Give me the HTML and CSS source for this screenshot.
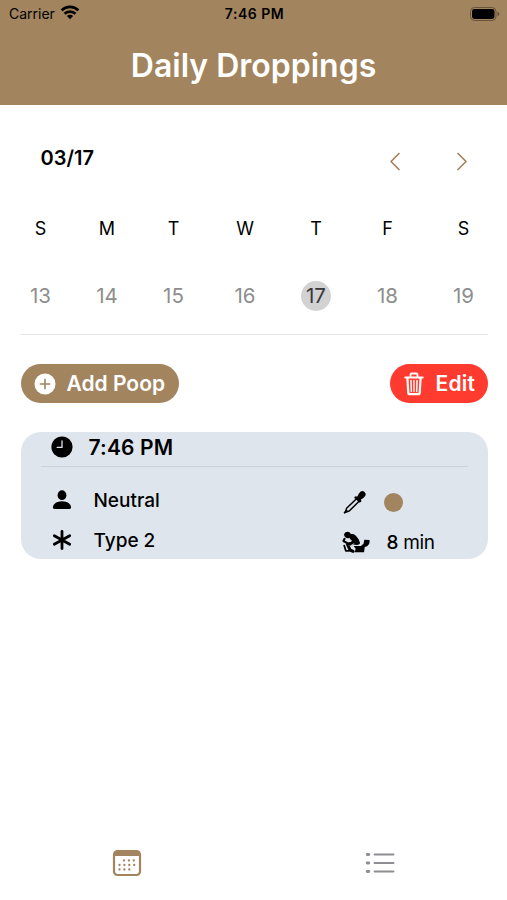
FILE: index.html
```
<!DOCTYPE html>
<html lang="en">
<head>
  <meta charset="UTF-8">
  <meta name="viewport" content="width=device-width, initial-scale=1.0">
  <title>Daily Droppings</title>
  <link rel="stylesheet" href="styles.css">
</head>
<body>
  <div class="app">
    <!-- Header with status bar -->
    <header class="header">
      <div class="status-bar">
        <div class="carrier">
          <span>Carrier</span>
          <svg width="20" height="15" viewBox="0 0 20 15">
            <g fill="none" stroke="#000" stroke-width="2.7">
              <path d="M1.6 5.4a12 12 0 0 1 16.8 0"/>
              <path d="M4.5 8.8a7.8 7.8 0 0 1 11 0"/>
            </g>
            <path d="M10 14.2l-3.1-3.1a4.4 4.4 0 0 1 6.2 0z"/>
          </svg>
        </div>
        <span class="status-time">7:46 PM</span>
        <svg class="battery" width="30" height="14" viewBox="0 0 30 14">
          <rect x=".5" y=".5" width="25.5" height="13" rx="4" fill="none" stroke="#69543a"/>
          <rect x="2" y="2" width="22.5" height="10" rx="2.4"/>
          <path d="M27.5 4.8v4.4q2-.8 2-2.2t-2-2.2z" fill="#69543a"/>
        </svg>
      </div>
      <h1>Daily Droppings</h1>
    </header>

    <main class="content">
      <!-- Week picker -->
      <div class="week-header">
        <h2>03/17</h2>
        <div class="week-nav">
          <button class="nav-btn" aria-label="Previous week">
            <svg width="12" height="19" viewBox="0 0 12 19"><path d="M10 1.5l-8 8 8 8"/></svg>
          </button>
          <button class="nav-btn" aria-label="Next week">
            <svg width="12" height="19" viewBox="0 0 12 19"><path d="M2 1.5l8 8-8 8"/></svg>
          </button>
        </div>
      </div>

      <div class="week days">
        <span>S</span><span>M</span><span>T</span><span>W</span><span>T</span><span>F</span><span>S</span>
      </div>
      <div class="week dates">
        <span>13</span><span>14</span><span>15</span><span>16</span><span class="selected">17</span><span>18</span><span>19</span>
      </div>

      <div class="actions">
        <button class="btn add-btn">
          <svg width="22" height="22" viewBox="0 0 22 22">
            <circle cx="11" cy="11" r="10.5" fill="#fff"/>
            <path d="M11 6.3v9.4M6.3 11h9.4" stroke="#a2845e" stroke-width="1.6" stroke-linecap="round"/>
          </svg>
          <span>Add Poop</span>
        </button>
        <button class="btn edit-btn">
          <svg width="20" height="24" viewBox="0 0 20 24" fill="none" stroke="#fff" stroke-linecap="round" stroke-linejoin="round">
            <path d="M6.5 4.5V2.7q0-1.2 1.2-1.2h4.6q1.2 0 1.2 1.2v1.8" stroke-width="1.8"/>
            <path d="M1.3 5.4h17.4" stroke-width="2"/>
            <path d="M3.4 6l.9 14.6q.1 1.6 1.6 1.6h8.2q1.5 0 1.6-1.6l.9-14.6" stroke-width="2.2"/>
            <path d="M7 8.5l.3 11M10 8.5v11M13 8.5l-.3 11" stroke-width="1.4"/>
          </svg>
          <span>Edit</span>
        </button>
      </div>

      <!-- Log entry -->
      <section class="entry">
        <div class="entry-time">
          <svg width="22" height="22" viewBox="0 0 22 22">
            <circle cx="11" cy="11" r="10.6"/>
            <path d="M11 4.8v6.6H6.2" fill="none" stroke="#dfe5ec" stroke-width="1.3" stroke-linecap="round"/>
          </svg>
          <span>7:46 PM</span>
        </div>
        <div class="entry-grid">
          <div class="detail">
            <svg width="20" height="20" viewBox="0 0 20 20">
              <ellipse cx="10" cy="5.2" rx="4.4" ry="4.9"/>
              <path d="M1 17.2c0-3.1 3.6-6 9-6s9 2.9 9 6q0 1.9-1.8 1.9H2.8Q1 19.1 1 17.2z"/>
            </svg>
            <span>Neutral</span>
          </div>
          <div class="detail detail-right">
            <svg width="28" height="24" viewBox="0 0 28 24">
              <path d="M3.6 21.8l1-3.5L15 8.2l2.6 2.6L7.2 21l-2.9 1z" fill="none" stroke="#000" stroke-width="1.5" stroke-linejoin="round"/>
              <path d="M2.7 22.6l1.8-1.8" stroke="#000" stroke-width="2" stroke-linecap="round"/>
              <path d="M12.6 6.9q1.1-1.3 2.5-.2l1.8-3.3q3-3.7 5.6-1.5 2.9 2.7-.9 5.8l-2.9 2q1.3 1.2.1 2.4-1.1.9-2.1-.1l-4-3.8q-.8-.6-.1-1.3z"/>
            </svg>
            <span class="color-dot"></span>
          </div>
          <div class="detail">
            <svg width="20" height="20" viewBox="0 0 20 20">
              <path d="M10 1.5v17M2.3 5.7l15.4 8.6M2.3 14.3l15.4-8.6" stroke="#000" stroke-width="2.8" stroke-linecap="round"/>
            </svg>
            <span>Type 2</span>
          </div>
          <div class="detail detail-right">
            <!-- person bent over on the toilet -->
            <svg width="28" height="22" viewBox="0 0 28 22">
              <path d="M2 3.6Q2.6.7 5.8.7q2.6 0 3.2 2.6.4 2.4-1.6 3.6-2.2 1.1-4.1-.6Q2.2 5.2 2 3.6z"/>
              <path d="M8.6 3.1q2.9-.7 5 1.3 3.5 3.2 4.5 7.6-.3 1.8-2.6 1.9l-5.7-.3-1-4.8-1.7-2.4q1.6-1.3 1.5-3.3z"/>
              <path d="M2.5 7.9L1.5 10l4.7 2.6 5.4-1" fill="none" stroke="#000" stroke-width="2.2" stroke-linecap="round" stroke-linejoin="round"/>
              <path d="M9.8 12.8l-4.3.6 2.6 5.6 3 1.3" fill="none" stroke="#000" stroke-width="3" stroke-linecap="round" stroke-linejoin="round"/>
              <path d="M2.2 14.6l1.6 5.2h3" fill="none" stroke="#000" stroke-width="1.8" stroke-linecap="round" stroke-linejoin="round"/>
              <path d="M11.6 15h7.3l2.6-2.2.8-4.1 5.2.2q.7 4.6-2.9 6.7l-1.9.5-.6 5.2h-9.5l1.1-3.5z"/>
              <path d="M5 8.9l2.2 1.2 2.8-.5M12.2 12.7l-2.9 1.5 1.7 3.2" fill="none" stroke="#dfe5ec" stroke-width=".8"/>
            </svg>
            <span class="duration"><b>8</b> min</span>
          </div>
        </div>
      </section>
    </main>

    <!-- Tab bar -->
    <nav class="tab-bar">
      <svg width="30" height="28" viewBox="0 0 30 28">
        <rect x="2" y="2" width="26" height="24" rx="3.5" fill="none" stroke="#a2845e" stroke-width="2.2"/>
        <path d="M2 7V5q0-3 3-3h20q3 0 3 3v2z" fill="#a2845e"/>
        <path d="M12 11.5h11M7.5 16h15.5M7.5 20.5h11" fill="none" stroke="#a2845e" stroke-width="2.3" stroke-linecap="round" stroke-dasharray="0 4.9"/>
      </svg>
      <svg width="30" height="24" viewBox="0 0 30 24">
        <path d="M2.2 3.5h1.6M2.2 12h1.6M2.2 20.5h1.6" stroke="#8e8e93" stroke-width="2.9" stroke-linecap="round"/>
        <path d="M9.5 3.5h19M9.5 12h19M9.5 20.5h19" stroke="#8e8e93" stroke-width="1.9" stroke-linecap="round"/>
      </svg>
    </nav>
  </div>
</body>
</html>
```
FILE: styles.css
```
* {
  box-sizing: border-box;
}

body {
  font-family: Inter, "Liberation Sans", sans-serif;
  margin: 0;
  background: #fff;
  color: #000;
}

h1, h2 {
  margin: 0;
}

svg {
  display: block;
  flex-shrink: 0;
}

button {
  font-family: inherit;
  border: none;
  padding: 0;
  cursor: pointer;
}

.app {
  display: flex;
  flex-direction: column;
  height: 900px;
  overflow: hidden;
}

/* Header */
.header {
  height: 105px;
  background: #a2845e;
}

.status-bar {
  display: grid;
  grid-template-columns: 1fr auto 1fr;
  align-items: center;
  height: 27px;
  padding: 0 7px 0 9px;
  font-size: 14px;
}

.carrier {
  display: flex;
  align-items: center;
  gap: 5px;
}

.carrier svg {
  margin-top: -3px;
}

.status-time {
  font-weight: 600;
  letter-spacing: 0.5px;
}

.battery {
  justify-self: end;
}

.header h1 {
  color: #fff;
  font-size: 32px;
  line-height: 40px;
  font-weight: 600;
  text-align: center;
  margin-top: 19px;
}

/* Week picker */
.content {
  flex: 1;
  padding: 0 19.5px 0 20.5px;
}

.week-header {
  display: flex;
  justify-content: space-between;
  padding: 39px 20px 0;
  height: 108px;
}

.week-header h2 {
  font-size: 20px;
  line-height: 28px;
  font-weight: 600;
}

.week-nav {
  display: flex;
  gap: 55px;
  height: 19px;
  margin-top: 8px;
}

.nav-btn {
  background: none;
}

.nav-btn path {
  fill: none;
  stroke: #a2845e;
  stroke-width: 1.7;
  stroke-linecap: round;
  stroke-linejoin: round;
}

.week {
  display: grid;
  grid-template-columns: 40px 93px 40px 103px 39px 104px 48px;
  justify-items: center;
  align-items: center;
}

.days {
  height: 30px;
  font-size: 18px;
}

.dates {
  height: 92px;
  padding-top: 14px;
  border-bottom: 1px solid #e4e4e5;
  font-size: 20.5px;
  color: #8e8e8e;
}

.selected {
  width: 30px;
  height: 30px;
  line-height: 30px;
  border-radius: 50%;
  background: #d2d2d3;
  color: #38383a;
  text-align: center;
}

/* Buttons */
.actions {
  display: flex;
  justify-content: space-between;
  margin: 29px 0;
}

.btn {
  display: flex;
  align-items: center;
  height: 39px;
  border-radius: 20px;
  color: #fff;
  font-size: 21px;
  font-weight: 600;
}

.add-btn {
  width: 158px;
  padding-left: 13px;
  gap: 11px;
  background: #a2845e;
}

.edit-btn {
  width: 98px;
  padding-left: 14px;
  gap: 12px;
  background: #ff3b30;
}

.edit-btn span {
  letter-spacing: 0.2px;
}

/* Log entry */
.entry {
  height: 127px;
  padding: 0 20px;
  border-radius: 20px;
  background: #dfe5ec;
  overflow: hidden;
}

.entry-time {
  display: flex;
  align-items: center;
  gap: 16px;
  height: 35px;
  padding: 0 0 4px 10px;
  border-bottom: 1px solid #ccd2d8;
  font-size: 21px;
  font-weight: 600;
  letter-spacing: 0.15px;
}

.entry-grid {
  display: grid;
  grid-template-columns: 290px 1fr;
  grid-template-rows: 40px 40px;
  padding: 13px 0 0 11px;
}

.detail {
  display: flex;
  align-items: center;
  gap: 22px;
  font-size: 19px;
  font-weight: 500;
}

.detail-right {
  gap: 17px;
  padding-top: 4px;
}

.color-dot {
  width: 19px;
  height: 19px;
  margin-left: -3px;
  border-radius: 50%;
  background: #a2845e;
}

.duration {
  font-weight: 400;
  letter-spacing: -0.3px;
}

.duration b {
  font-weight: 500;
}

/* Tab bar */
.tab-bar {
  display: grid;
  grid-template-columns: 1fr 1fr;
  justify-items: center;
  align-items: center;
  height: 74px;
}
```
